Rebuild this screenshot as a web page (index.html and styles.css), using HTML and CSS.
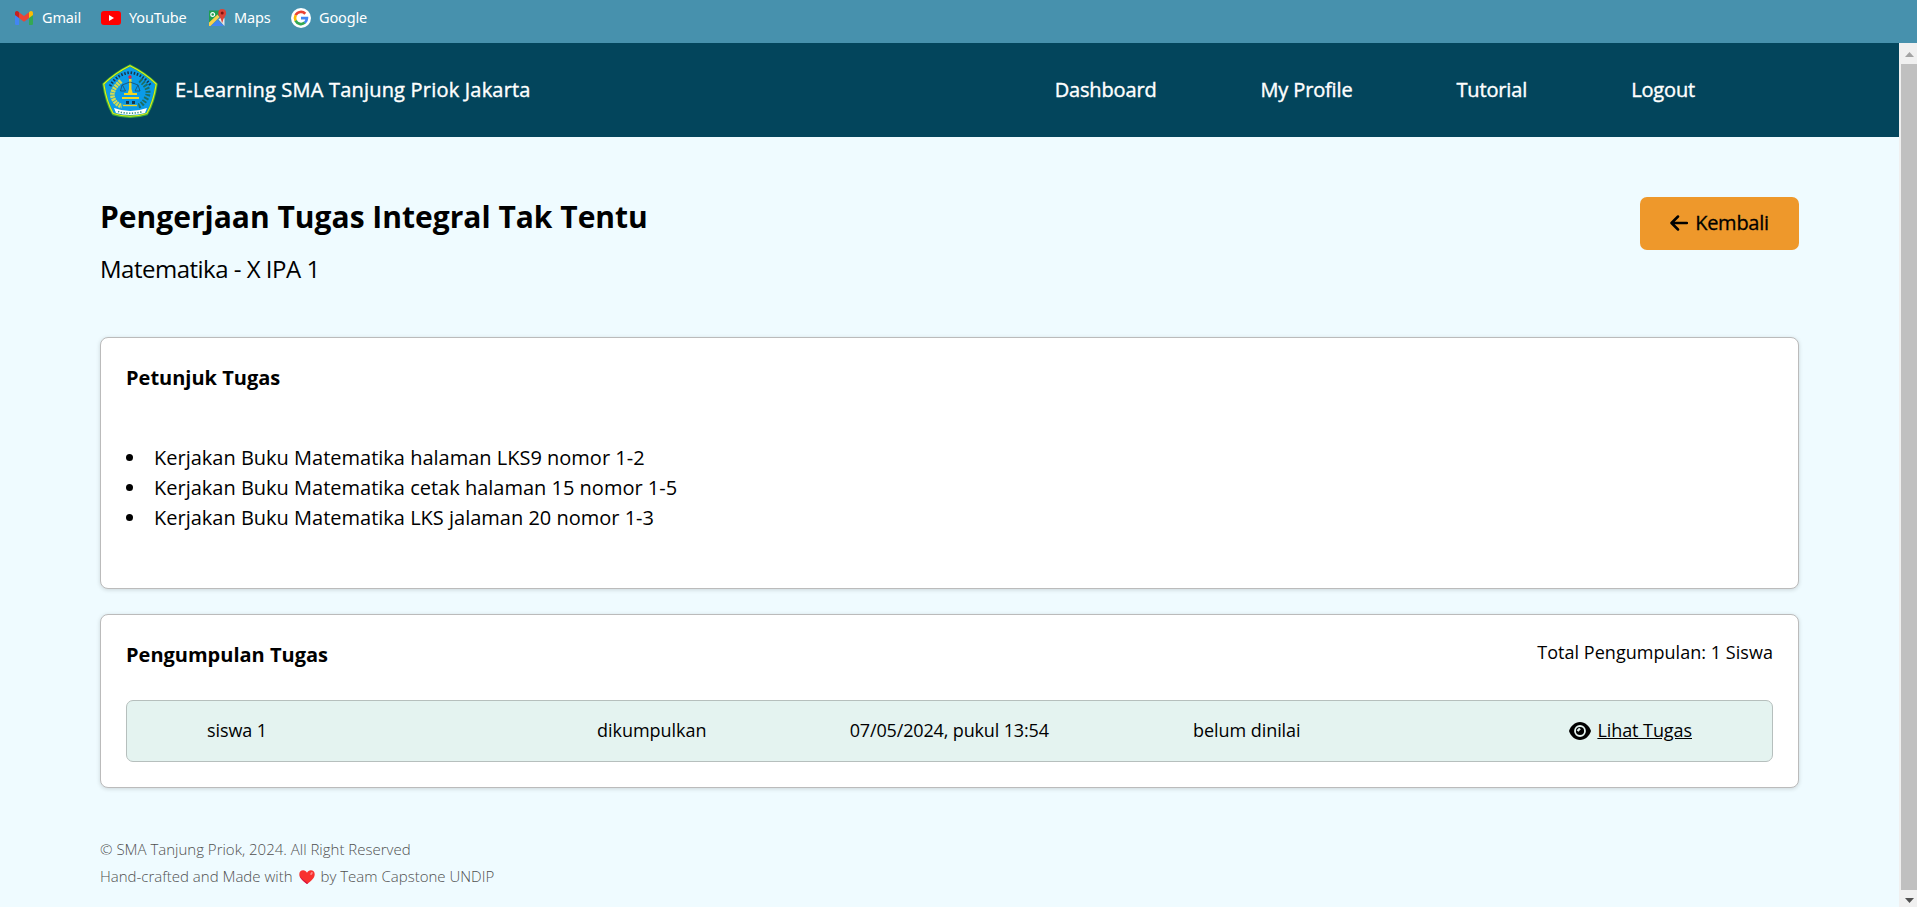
FILE: index.html
```
<!DOCTYPE html>
<html lang="id">
<head>
<meta charset="utf-8">
<title>Pengerjaan Tugas</title>
<link rel="stylesheet" href="styles.css">
</head>
<body>
<div class="bookmarks">
  <a class="bookmark gmail"><svg width="18" height="14" viewBox="0 0 18 14"><path fill="#4285f4" d="M0 4v8.700q0 1.300 1.300 1.300H4V6z"/><path fill="#34a853" d="M18 4v8.700q0 1.300-1.300 1.300H14V6z"/><path fill="#ea4335" d="M4 1.200 9 5l5-3.800V7l-5 3.800L4 7z"/><path fill="#c5221f" d="M0 2.200C0 0 2.300-.7 4 1.200V7L0 4z"/><path fill="#fbbc04" d="M18 2.200C18 0 15.700-.7 14 1.200V7l4-3z"/></svg><span>Gmail</span></a>
  <a class="bookmark youtube"><svg width="20" height="14" viewBox="0 0 20 14"><rect width="20" height="14" rx="3" fill="#f00"/><path fill="#fff" d="M8 4v6l5-3z"/></svg><span>YouTube</span></a>
  <a class="bookmark maps"><svg width="19" height="18" viewBox="0 0 19 18"><path fill="#1e9e52" d="M1 1.500h11V6L1 15z"/><path fill="#fbd04a" d="M1 13.500 9.500 5.500l2 2.500L2.500 17H1z"/><path fill="#4285f4" d="m3 17 6.500-6 6.500 6z"/><path fill="#e8eaed" d="m10.500 10.500 4-3 2 2V17z"/><circle cx="4.700" cy="5.500" r="1.900" fill="none" stroke="#fff" stroke-width="1.200"/><path fill="#db4437" d="M14.200 0a3.900 3.900 0 0 1 3.900 3.900c0 3.500-3.100 4.700-3.600 9.700h-.6c-.5-5-3.600-6.200-3.600-9.700A3.900 3.900 0 0 1 14.200 0z"/><circle cx="14.200" cy="4" r="1.500" fill="#811411"/></svg><span>Maps</span></a>
  <a class="bookmark google"><svg width="20" height="20" viewBox="0 0 20 20"><circle cx="10" cy="10" r="10" fill="#fff"/><g fill="none" stroke-width="2.700"><path stroke="#ea4335" d="M4.600 7.200A6 6 0 0 1 14.300 5.800"/><path stroke="#fbbc04" d="M4.700 12.800A6 6 0 0 1 4.700 7.200"/><path stroke="#34a853" d="M13.900 14.600A6 6 0 0 1 4.600 12.700"/><path stroke="#4285f4" d="M10 10.200h5.900A6 6 0 0 1 13.800 14.700"/></g></svg><span>Google</span></a>
</div>
<div class="viewport">
  <div class="page">
    <nav class="navbar">
      <div class="brand">
        <svg class="logo" width="56" height="55" viewBox="0 0 56 55"><path d="M28 1.500Q43 9 54.500 20 52 38 45 50 28 55.500 11 50 4 38 1.500 20 13 9 28 1.500Z" fill="#0b9be8" stroke="#3fae3a" stroke-width="2.400" stroke-linejoin="round"/><path d="M28 1.800Q43 9 54.200 20 51.500 38 44.800 49.500 28 55 11.200 49.500 4.500 38 1.800 20 13 9 28 1.800Z" fill="none" stroke="#dcec1c" stroke-width="1.200" stroke-linejoin="round"/><path d="M8 22 Q15 10 28 8.500 Q41 10 49 22" fill="none" stroke="#17364c" stroke-width="2.800" stroke-dasharray="1.500 1.700"/><path d="M19 17Q8 27 11 34t9 8" fill="none" stroke="#d5dc50" stroke-width="4.600" stroke-dasharray="2.200 .7"/><path d="M38 16Q49 25 45 33t-9 9" fill="none" stroke="#1d6e62" stroke-width="5" stroke-dasharray="1.800 1.600"/><path d="M27 15h2.500v10l1.500 5h-5.500l1.500-5z" fill="#f2d622"/><circle cx="28" cy="13" r="1.700" fill="#e0253c"/><path d="M20 21 28 18 36 21M20 21l-1.500 6h5l-3-6M36 21l-3 6h5l-2-6" fill="none" stroke="#214b63" stroke-width=".8"/><path d="M22 30h13M20 34h17" stroke="#f2d622" stroke-width="1.800"/><path d="M24 37h3v3h-3zM30 37h3v3h-3z" fill="#17364c"/><path d="M21 41.500h14" stroke="#f2d622" stroke-width="1.400"/><path d="M12 44q16 6 33 0l-2 5q-15 4-29 0z" fill="#fff"/><path d="M16 47.500q12 3.500 25 0" fill="none" stroke="#3b8f86" stroke-width="1.600" stroke-dasharray="1.300 1.500"/></svg>
        <span class="brand-name">E-Learning SMA Tanjung Priok Jakarta</span>
      </div>
      <div class="menu"><a>Dashboard</a><a>My Profile</a><a>Tutorial</a><a>Logout</a></div>
    </nav>
    <main class="content">
      <header class="heading">
        <div>
          <h1>Pengerjaan Tugas Integral Tak Tentu</h1>
          <p class="subject">Matematika - X IPA 1</p>
        </div>
        <a class="back"><svg width="18" height="16" viewBox="0 0 18 16"><path d="M8 1.500 1.500 8 8 14.500M2 8h15" fill="none" stroke="#000" stroke-width="2.500" stroke-linecap="round" stroke-linejoin="round"/></svg><span>Kembali</span></a>
      </header>
      <section class="card instructions">
        <h2>Petunjuk Tugas</h2>
        <ul>
          <li><span>Kerjakan Buku Matematika halaman LKS9 nomor 1-2</span></li>
          <li><span>Kerjakan Buku Matematika cetak halaman 15 nomor 1-5</span></li>
          <li><span>Kerjakan Buku Matematika LKS jalaman 20 nomor 1-3</span></li>
        </ul>
      </section>
      <section class="card submissions">
        <div class="card-head"><h2>Pengumpulan Tugas</h2><p class="total">Total Pengumpulan: 1 Siswa</p></div>
        <div class="row">
          <span class="student">siswa 1</span>
          <div class="details"><span>dikumpulkan</span><span class="date">07/05/2024, pukul 13:54</span><span>belum dinilai</span></div>
          <a class="view"><svg width="22" height="18" viewBox="0 0 22 18"><path d="M11 0C16 0 20.500 4 22 9c-1.500 5-6 9-11 9S1.500 14 0 9C1.500 4 6 0 11 0z"/><circle cx="11" cy="9" r="5" fill="none" stroke="#e4f3f0" stroke-width="1.800"/><path d="M8.500 9 11 6.500" stroke="#e4f3f0" stroke-width="2.400"/></svg><span>Lihat Tugas</span></a>
        </div>
      </section>
      <footer class="footer">
        <p>© SMA Tanjung Priok, 2024. All Right Reserved</p>
        <p class="credit"><span>Hand-crafted and Made with</span><svg width="16" height="14" viewBox="0 0 16 14"><path fill="#f8312f" d="M8 14C3 10.500.3 7.500.3 4.200.3 1.700 2 .3 4.100.3 5.900.3 7.300 1.300 8 2.700 8.700 1.300 10.100.3 11.900.3c2.100 0 3.800 1.400 3.800 3.900C15.700 7.500 13 10.500 8 14z"/><ellipse cx="12.500" cy="3.500" rx="1" ry="1.700" fill="#ff8687" transform="rotate(30 12.500 3.500)"/><path d="M.4 5C1 8 4 10.700 8 14l1-.8C5 10.500 1.500 8 .4 5z" fill="#ca0b4a"/></svg><span>by Team Capstone UNDIP</span></p>
      </footer>
    </main>
  </div>
  <div class="scrollbar">
    <svg width="18" height="21" viewBox="0 0 18 21"><path fill="#a3a3a3" d="m6 14 4.500-5 4.500 5z"/></svg>
    <div class="thumb"></div>
    <svg width="18" height="17" viewBox="0 0 18 17"><path fill="#505050" d="m6 8 4.500 5L15 8z"/></svg>
  </div>
</div>
</body>
</html>
```
FILE: styles.css
```
* { box-sizing: border-box; }
body { margin: 0; height: 907px; overflow: hidden; font-family: "Open Sans", sans-serif; color: #000; display: flex; flex-direction: column; }
h1, h2, p, ul { margin: 0; padding: 0; }
svg { flex: none; display: block; }
span, a, h1, h2, p { white-space: nowrap; }

.bookmarks { height: 43px; background: #4791ad; display: flex; align-items: flex-start; padding-left: 15px; flex: none; }
.bookmark { display: flex; align-items: center; height: 36px; color: #fff; font-size: 14.5px; letter-spacing: -.15px; font-family: "Noto Sans", "Open Sans", sans-serif; }
.bookmark span { padding-bottom: 2px; }
.gmail { width: 86px; gap: 9px; }
.youtube { width: 107px; gap: 8px; }
.maps { width: 83px; gap: 7px; }
.google { gap: 8px; }

.viewport { flex: 1; display: flex; min-height: 0; }
.page { flex: 1; background: #effbff; }
.navbar { height: 94px; background: #03455c; color: #fff; display: flex; align-items: center; justify-content: space-between; padding: 0 204px 0 102px; }
.brand { display: flex; align-items: center; gap: 17px; font-size: 20px; letter-spacing: .2px; -webkit-text-stroke: .4px; }
.brand-name { padding-bottom: 2px; }
.logo { margin-top: 2px; -webkit-text-stroke: 0; }
.menu { display: flex; gap: 104px; font-size: 20px; letter-spacing: -.15px; -webkit-text-stroke: .4px; padding-bottom: 2px; }

.content { padding: 60px 100px 0; }
.heading { height: 140px; display: flex; justify-content: space-between; align-items: flex-start; }
h1 { font-size: 30px; line-height: 40px; font-weight: 700; }
.subject { font-size: 24px; line-height: 32px; letter-spacing: -.5px; margin-top: 16px; }
.back { width: 159px; height: 53px; border-radius: 7px; background: #ee982b; display: flex; align-items: center; justify-content: center; gap: 7px; font-size: 20px; letter-spacing: -.25px; }
.back svg { margin-bottom: 1px; }
.back span { -webkit-text-stroke: .3px; padding-bottom: 2px; }

.card { background: #fff; border: 1px solid #bbb; border-radius: 8px; box-shadow: 0 1px 4px rgba(0, 0, 0, .15); padding: 25px; }
h2 { font-size: 20px; line-height: 30px; font-weight: 700; }
.instructions { height: 252px; }
.instructions ul { list-style: none; margin-top: 50px; }
.instructions li { display: flex; align-items: center; gap: 21px; font-size: 20px; line-height: 30px; }
.instructions li::before { content: ""; width: 7px; height: 7px; border-radius: 50%; background: #000; margin-bottom: 2px; }
.submissions { height: 174px; margin-top: 25px; }
.card-head { display: flex; justify-content: space-between; height: 60px; }
.total { font-size: 18px; line-height: 24px; letter-spacing: .04px; }
.row { height: 62px; background: #e4f3f0; border: 1px solid #b6bfbd; border-radius: 7px; display: flex; align-items: center; font-size: 18px; letter-spacing: -.07px; }
.row span { padding-bottom: 2px; }
.student { width: 220px; text-align: center; }
.details { display: grid; grid-template-columns: repeat(3, 297.500px); margin-left: 156px; text-align: center; letter-spacing: -.05px; }
.date { letter-spacing: -.15px; }
.view { margin-left: auto; margin-right: 80px; display: flex; align-items: center; gap: 6px; }
.view span { text-decoration: underline; }

.footer { margin-top: 48px; color: #505050; font-size: 15px; font-weight: 300; line-height: 27px; }
.credit { display: flex; align-items: center; gap: 6px; }

.scrollbar { width: 18px; flex: none; background: #f0f0f0; display: flex; flex-direction: column; }
.thumb { flex: 1; margin-left: 2px; background: #c0c0c0; }
```
